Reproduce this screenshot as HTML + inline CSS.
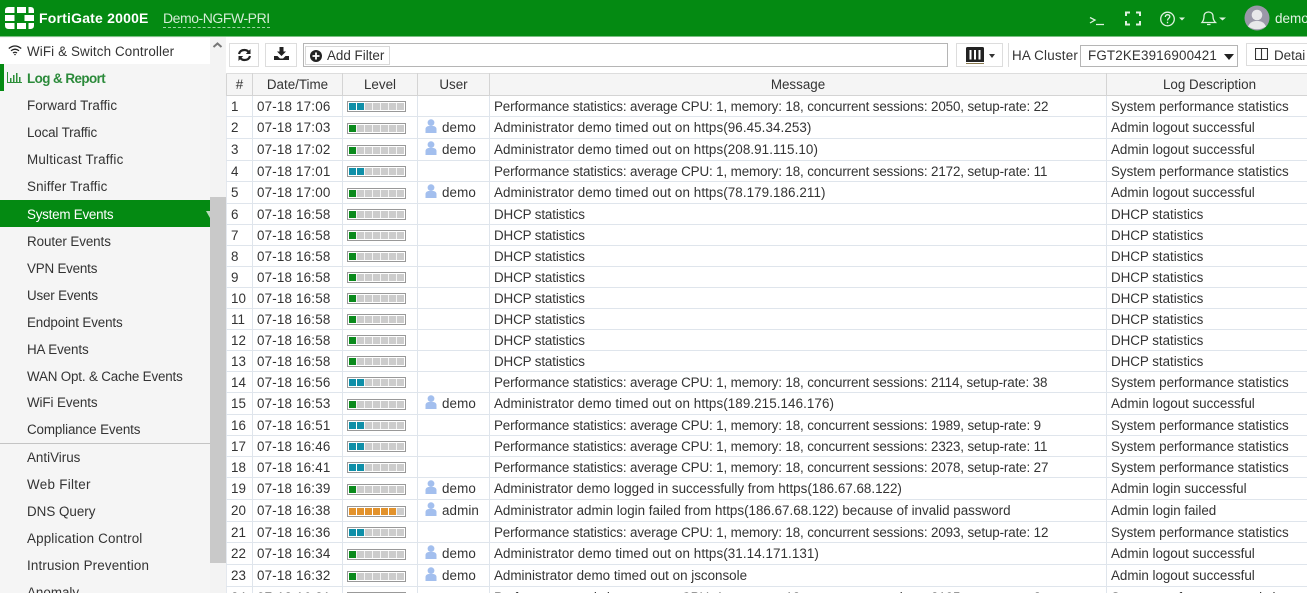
<!DOCTYPE html>
<html><head><meta charset="utf-8"><style>
*{box-sizing:border-box}
html,body{margin:0;padding:0;width:1307px;height:593px;overflow:hidden;background:#fff}
body{font:13.4px "Liberation Sans",sans-serif;color:#333;position:relative}
.a{position:absolute;white-space:nowrap}
#top{left:0;top:0;width:1307px;height:37px;background:#048a12;border-bottom:1px solid #7cc084}
#side{left:0;top:37px;width:210px;height:556px;background:#f5f5f5;overflow:hidden}
.n{position:absolute;left:27px;line-height:22px;white-space:nowrap;color:#333}
.btn{position:absolute;background:#fff;border:1px solid #ddd;top:43px;height:24px}
table{position:absolute;left:226px;top:73px;width:1086px;border-collapse:collapse;table-layout:fixed}
th{height:22px;background:#f5f5f5;font-weight:normal;border:1px solid #d4d4d4;border-top:1px solid #ddd;padding:0;text-align:center;color:#333}
td{border:1px solid #dfe5ec;border-left:1px solid #e4e8ee;padding:0 0 0 4px;white-space:nowrap;overflow:hidden;line-height:16px}
tr.r{height:21px}tr.t{height:22px}
tr.r td{padding-top:1px}
tr.t td:nth-child(3){padding-top:1px}
td:nth-child(2){letter-spacing:.18px}
tr.r td:nth-child(5){letter-spacing:-.13px}
td.x{letter-spacing:.08px}
td:nth-child(6){letter-spacing:-.03px}
.b{display:block;width:59px;height:11px;border:1px solid #999;padding:1px;background:#fff}
.b s{display:block;height:7px;width:55px;background:repeating-linear-gradient(90deg,#ccc 0 7px,#f4f4f4 7px 8px)}
.b i{display:block;height:7px}
.g{width:7px;background:#0a8a1c}
.c{width:15px;background:repeating-linear-gradient(90deg,#0f8fa8 0 7px,#fff 7px 8px)}
.o{width:47px;background:repeating-linear-gradient(90deg,#e2922c 0 7px,#fff 7px 8px)}
.u svg{vertical-align:-1px;margin:0 5px 0 3px}
.u{letter-spacing:.1px}
</style></head><body>
<svg width="0" height="0" style="position:absolute"><symbol id="p" viewBox="0 0 12 14"><circle cx="6" cy="3.6" r="3.4" fill="#a3bfee"/><path d="M0.5 14V10C.5 8 2.500 7 4 7H8C9.500 7 11.500 8 11.500 10V14Z" fill="#a3bfee"/></symbol></svg>

<div id="top" class="a">
<svg class="a" style="left:5px;top:7px" width="30" height="23" viewBox="0 0 30 23" fill="#fff"><path d="M0 6V3.500Q0 0 3.500 0H9.500V6ZM12 0H21V6H12ZM23.500 0H25.500Q29 0 29 3.500V6H23.500ZM0 8H9.500V14H0ZM19.500 8H29V14H19.500ZM0 16H9.500V22H3.500Q0 22 0 18.500ZM12 16H21V22H12ZM23.500 16H29V18.500Q29 22 25.500 22H23.500Z"/></svg>
<div class="a" style="left:39px;top:9px;color:#fff;font-weight:bold;font-size:14px;line-height:18px;letter-spacing:.2px">FortiGate 2000E</div>
<div class="a" style="left:163px;top:9px;color:#d4ecd6;font-size:14px;line-height:18px;border-bottom:1px dashed #9fd3a5;letter-spacing:-.45px">Demo-NGFW-PRI</div>
<svg class="a" style="left:1088px;top:10px" width="142" height="18" viewBox="0 0 142 18" fill="none" stroke="#dff1e0" stroke-width="1.300">
<path d="M2 7.500L7 10L2 13M8 14.500H16"/>
<path d="M38 6V2.500H42M48 2.500H52V6M38 11V14.500H42M48 14.500H52V11" stroke-width="2"/>
<circle cx="79.500" cy="9" r="6.800"/><path d="M77.300 7Q77.500 4.700 79.700 4.700Q81.800 4.800 81.800 6.800C81.800 8.300 79.500 8.300 79.500 10.500M79.500 11.800V13.300"/>
<path d="M91 7.500H97L94 10.500Z" fill="#dff1e0" stroke="none"/>
<path d="M114 12.500C115.500 10.500 116 9 116 6.500C116 3.500 118 2 120.500 2C123 2 125 3.500 125 6.500C125 9 125.500 10.500 127.500 12.500ZM119 14.500H122.500"/>
<path d="M131 7.500H138L134.500 10.500Z" fill="#dff1e0" stroke="none"/>
</svg>
<svg class="a" style="left:1244px;top:5px" width="26" height="26" viewBox="0 0 26 26"><circle cx="13" cy="13" r="12.500" fill="#9a98a8"/><circle cx="13" cy="10" r="5.300" fill="#e8e8ea"/><path d="M4 21.500C6 17 9 16 13 16C17 16 20 17 22 21.500Q13 27 4 21.500Z" fill="#e8e8ea"/></svg>
<div class="a" style="left:1275px;top:10px;color:#e3f3e4;line-height:17px;font-size:13.5px">demo</div>
</div>

<div id="side" class="a">
<div class="a" style="left:0;top:1px;width:210px;height:26px;background:#fff"></div>
<div class="a" style="left:0;top:27px;width:4px;height:27px;background:#048a12"></div>
<svg class="a" style="left:8px;top:8px" width="14" height="11" viewBox="0 0 14 11" fill="none" stroke="#222" stroke-width="1.300"><path d="M.8 3.500Q7 -1.500 13.200 3.500M3 5.800Q7 2.500 11 5.800M5 8Q7 6.500 9 8"/><circle cx="7" cy="9.500" r=".8" fill="#222" stroke="none"/></svg>
<svg class="a" style="left:7px;top:35px" width="15" height="11" viewBox="0 0 15 11" fill="#2d8f3a"><path d="M0 0h1v10H15v1H0zM3 6h1.500v4H3zM6 3h1.500v7H6zM9 1h1.500v9H9zM12 5h1.500v5H12z"/></svg>
<div class="n" style="top:4px;letter-spacing:.12px">WiFi &amp; Switch Controller</div>
<div class="n" style="top:31px;color:#2b8a3a;font-weight:bold;letter-spacing:-.55px">Log &amp; Report</div>
<div class="n" style="top:58px;letter-spacing:.07px">Forward Traffic</div>
<div class="n" style="top:85px;letter-spacing:-.15px">Local Traffic</div>
<div class="n" style="top:112px;letter-spacing:.22px">Multicast Traffic</div>
<div class="n" style="top:139px;letter-spacing:.14px">Sniffer Traffic</div>
<div class="a" style="left:0;top:163px;width:210px;height:27px;background:#048a12"></div>
<div class="n" style="top:167px;color:#fff;letter-spacing:-.23px">System Events</div>
<div class="a" style="left:206px;top:174px;border-left:4px solid transparent;border-right:0;border-top:7px solid #b6dcb9"></div>
<div class="n" style="top:194px;letter-spacing:-.08px">Router Events</div>
<div class="n" style="top:221px;letter-spacing:-.2px">VPN Events</div>
<div class="n" style="top:248px;letter-spacing:-.18px">User Events</div>
<div class="n" style="top:275px;letter-spacing:-.13px">Endpoint Events</div>
<div class="n" style="top:302px;letter-spacing:-.11px">HA Events</div>
<div class="n" style="top:329px;letter-spacing:-.17px">WAN Opt. &amp; Cache Events</div>
<div class="n" style="top:355px;letter-spacing:-.09px">WiFi Events</div>
<div class="n" style="top:382px;letter-spacing:-.12px">Compliance Events</div>
<div class="a" style="left:0;top:406px;width:210px;height:1px;background:#c4c4c4"></div>
<div class="n" style="top:410px">AntiVirus</div>
<div class="n" style="top:437px;letter-spacing:.3px">Web Filter</div>
<div class="n" style="top:464px">DNS Query</div>
<div class="n" style="top:491px;letter-spacing:.16px">Application Control</div>
<div class="n" style="top:518px;letter-spacing:.15px">Intrusion Prevention</div>
<div class="n" style="top:545px">Anomaly</div>
</div>
<div class="a" style="left:210px;top:37px;width:16px;height:556px;background:#f3f3f3"></div>
<div class="a" style="left:210px;top:197px;width:16px;height:366px;background:#c9c9c9"></div>
<svg class="a" style="left:212px;top:41px" width="11" height="8" viewBox="0 0 11 8" fill="none" stroke="#777" stroke-width="2"><path d="M1.500 6L5.500 2.500L9.500 6"/></svg>

<div class="btn" style="left:229px;width:30px">
<svg class="a" style="left:7px;top:4px" width="15" height="14" viewBox="0 0 15 14" fill="none" stroke="#222" stroke-width="2.200"><path d="M2 6Q3 2 7.500 2Q10.500 2 12 4.500M13 8Q12 12 7.500 12Q4.500 12 3 9.500"/><path d="M13.500 1V6H8.800ZM1.500 13V8H6.200Z" fill="#222" stroke="none"/></svg></div>
<div class="btn" style="left:265px;width:32px">
<svg class="a" style="left:8px;top:3px" width="15" height="14" viewBox="0 0 15 14" fill="#222"><path d="M5.500 0H9.500V4.500H12L7.500 9L3 4.500H5.500ZM0 9H3.500L6 11.500H9L11.500 9H15V13H0Z"/></svg></div>
<div class="a" style="left:303px;top:43px;width:645px;height:24px;background:#fff;border:1px solid #b5b5b5"></div>
<div class="a" style="left:305px;top:46px;width:85px;height:19px;background:#fff;border:1px solid #d8d8d8"></div>
<svg class="a" style="left:310px;top:50px" width="12" height="12" viewBox="0 0 12 12"><circle cx="6" cy="6" r="6" fill="#222"/><path d="M6 2.500V9.500M2.500 6H9.500" stroke="#fff" stroke-width="1.800"/></svg>
<div class="a" style="left:327px;top:47px;line-height:18px">Add Filter</div>
<div class="btn" style="left:956px;width:47px">
<svg class="a" style="left:9px;top:3px" width="18" height="18" viewBox="0 0 18 18"><path d="M0 1.500Q0 0 1.500 0H16.500Q18 0 18 1.500V15H0Z" fill="#222"/><path d="M4.500 3V12.500M9 3V12.500M13.500 3V12.500" stroke="#fff" stroke-width="2"/><path d="M0 16.500H18" stroke="#8a7a50" stroke-width="1"/></svg>
<div class="a" style="left:32px;top:10px;border-left:3.500px solid transparent;border-right:3.500px solid transparent;border-top:4px solid #333"></div></div>
<div class="a" style="left:1008px;top:43px;width:1px;height:24px;background:#ddd"></div>
<div class="a" style="left:1012px;top:47px;line-height:17px;letter-spacing:.2px">HA Cluster</div>
<div class="a" style="left:1080px;top:45px;width:158px;height:22px;background:#fff;border:1px solid #b5b5b5"></div>
<div class="a" style="left:1088px;top:47px;line-height:17px;letter-spacing:.15px">FGT2KE3916900421</div>
<div class="a" style="left:1224px;top:54px;border-left:5px solid transparent;border-right:5px solid transparent;border-top:6px solid #222"></div>
<div class="btn" style="left:1246px;width:70px;height:23px"></div>
<svg class="a" style="left:1255px;top:48px" width="13" height="12" viewBox="0 0 13 12" fill="none" stroke="#333" stroke-width="1.100"><path d="M.5 .5H12.500V11.500H.5ZM6.500 .5V11.500"/></svg>
<div class="a" style="left:1274px;top:47px;line-height:17px">Detai</div>

<table>
<colgroup><col style="width:26px"><col style="width:90px"><col style="width:75px"><col style="width:72px"><col style="width:617px"><col style="width:206px"></colgroup>
<tr><th>#</th><th>Date/Time</th><th>Level</th><th>User</th><th>Message</th><th>Log Description</th></tr>
<tr class="r"><td>1</td><td>07-18 17:06</td><td><span class="b"><s><i class="c"></i></s></span></td><td></td><td>Performance statistics: average CPU: 1, memory: 18, concurrent sessions: 2050, setup-rate: 22</td><td>System performance statistics</td></tr>
<tr class="t"><td>2</td><td>07-18 17:03</td><td><span class="b"><s><i class="g"></i></s></span></td><td class="u"><svg width="12" height="14"><use href="#p"/></svg>demo</td><td class="x">Administrator demo timed out on https(96.45.34.253)</td><td>Admin logout successful</td></tr>
<tr class="t"><td>3</td><td>07-18 17:02</td><td><span class="b"><s><i class="g"></i></s></span></td><td class="u"><svg width="12" height="14"><use href="#p"/></svg>demo</td><td class="x">Administrator demo timed out on https(208.91.115.10)</td><td>Admin logout successful</td></tr>
<tr class="r"><td>4</td><td>07-18 17:01</td><td><span class="b"><s><i class="c"></i></s></span></td><td></td><td>Performance statistics: average CPU: 1, memory: 18, concurrent sessions: 2172, setup-rate: 11</td><td>System performance statistics</td></tr>
<tr class="t"><td>5</td><td>07-18 17:00</td><td><span class="b"><s><i class="g"></i></s></span></td><td class="u"><svg width="12" height="14"><use href="#p"/></svg>demo</td><td class="x">Administrator demo timed out on https(78.179.186.211)</td><td>Admin logout successful</td></tr>
<tr class="r"><td>6</td><td>07-18 16:58</td><td><span class="b"><s><i class="g"></i></s></span></td><td></td><td>DHCP statistics</td><td>DHCP statistics</td></tr>
<tr class="r"><td>7</td><td>07-18 16:58</td><td><span class="b"><s><i class="g"></i></s></span></td><td></td><td>DHCP statistics</td><td>DHCP statistics</td></tr>
<tr class="r"><td>8</td><td>07-18 16:58</td><td><span class="b"><s><i class="g"></i></s></span></td><td></td><td>DHCP statistics</td><td>DHCP statistics</td></tr>
<tr class="r"><td>9</td><td>07-18 16:58</td><td><span class="b"><s><i class="g"></i></s></span></td><td></td><td>DHCP statistics</td><td>DHCP statistics</td></tr>
<tr class="r"><td>10</td><td>07-18 16:58</td><td><span class="b"><s><i class="g"></i></s></span></td><td></td><td>DHCP statistics</td><td>DHCP statistics</td></tr>
<tr class="r"><td>11</td><td>07-18 16:58</td><td><span class="b"><s><i class="g"></i></s></span></td><td></td><td>DHCP statistics</td><td>DHCP statistics</td></tr>
<tr class="r"><td>12</td><td>07-18 16:58</td><td><span class="b"><s><i class="g"></i></s></span></td><td></td><td>DHCP statistics</td><td>DHCP statistics</td></tr>
<tr class="r"><td>13</td><td>07-18 16:58</td><td><span class="b"><s><i class="g"></i></s></span></td><td></td><td>DHCP statistics</td><td>DHCP statistics</td></tr>
<tr class="r"><td>14</td><td>07-18 16:56</td><td><span class="b"><s><i class="c"></i></s></span></td><td></td><td>Performance statistics: average CPU: 1, memory: 18, concurrent sessions: 2114, setup-rate: 38</td><td>System performance statistics</td></tr>
<tr class="t"><td>15</td><td>07-18 16:53</td><td><span class="b"><s><i class="g"></i></s></span></td><td class="u"><svg width="12" height="14"><use href="#p"/></svg>demo</td><td class="x">Administrator demo timed out on https(189.215.146.176)</td><td>Admin logout successful</td></tr>
<tr class="r"><td>16</td><td>07-18 16:51</td><td><span class="b"><s><i class="c"></i></s></span></td><td></td><td>Performance statistics: average CPU: 1, memory: 18, concurrent sessions: 1989, setup-rate: 9</td><td>System performance statistics</td></tr>
<tr class="r"><td>17</td><td>07-18 16:46</td><td><span class="b"><s><i class="c"></i></s></span></td><td></td><td>Performance statistics: average CPU: 1, memory: 18, concurrent sessions: 2323, setup-rate: 11</td><td>System performance statistics</td></tr>
<tr class="r"><td>18</td><td>07-18 16:41</td><td><span class="b"><s><i class="c"></i></s></span></td><td></td><td>Performance statistics: average CPU: 1, memory: 18, concurrent sessions: 2078, setup-rate: 27</td><td>System performance statistics</td></tr>
<tr class="t"><td>19</td><td>07-18 16:39</td><td><span class="b"><s><i class="g"></i></s></span></td><td class="u"><svg width="12" height="14"><use href="#p"/></svg>demo</td><td>Administrator demo logged in successfully from https(186.67.68.122)</td><td>Admin login successful</td></tr>
<tr class="t"><td>20</td><td>07-18 16:38</td><td><span class="b"><s><i class="o"></i></s></span></td><td class="u"><svg width="12" height="14"><use href="#p"/></svg>admin</td><td>Administrator admin login failed from https(186.67.68.122) because of invalid password</td><td>Admin login failed</td></tr>
<tr class="r"><td>21</td><td>07-18 16:36</td><td><span class="b"><s><i class="c"></i></s></span></td><td></td><td>Performance statistics: average CPU: 1, memory: 18, concurrent sessions: 2093, setup-rate: 12</td><td>System performance statistics</td></tr>
<tr class="t"><td>22</td><td>07-18 16:34</td><td><span class="b"><s><i class="g"></i></s></span></td><td class="u"><svg width="12" height="14"><use href="#p"/></svg>demo</td><td class="x">Administrator demo timed out on https(31.14.171.131)</td><td>Admin logout successful</td></tr>
<tr class="t"><td>23</td><td>07-18 16:32</td><td><span class="b"><s><i class="g"></i></s></span></td><td class="u"><svg width="12" height="14"><use href="#p"/></svg>demo</td><td>Administrator demo timed out on jsconsole</td><td>Admin logout successful</td></tr>
<tr class="r"><td>24</td><td>07-18 16:31</td><td><span class="b"><s><i class="c"></i></s></span></td><td></td><td>Performance statistics: average CPU: 1, memory: 18, concurrent sessions: 2105, setup-rate: 3</td><td>System performance statistics</td></tr>
</table>
</body></html>
